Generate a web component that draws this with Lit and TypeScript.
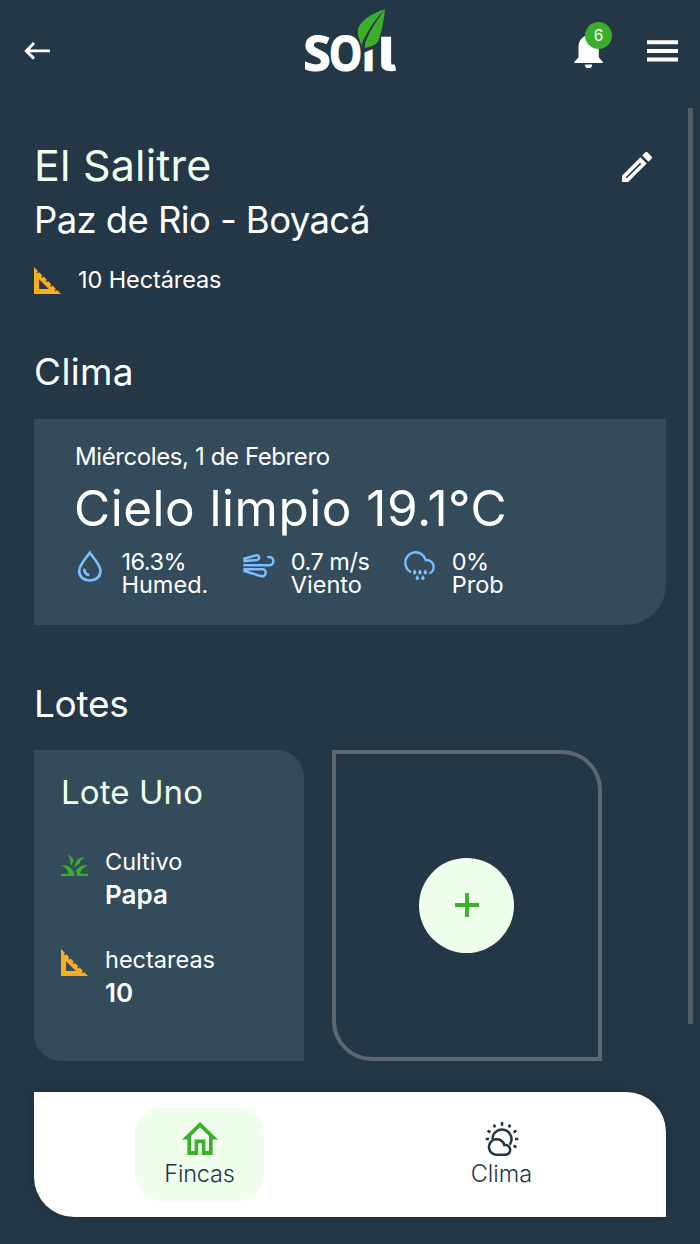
import { LitElement, html, css, svg } from "lit";
import { customElement, property } from "lit/decorators.js";

const squareFoot = html`<svg class="foot" viewBox="4 4 16 16" aria-hidden="true">
  <path d="M17.66 17.66l-.7.7-.71-.71.7-.7-1.94-1.94-.7.7-.71-.71.7-.7-1.94-1.94-.7.7-.71-.71.7-.7L9.7 9.7l-.7.7-.71-.71.7-.7-1.94-1.94-.7.7-.71-.71.7-.7L4 4v16h16zM7 17v-5.76L12.76 17z"/>
</svg>`;

const grass = html`<svg class="grass" viewBox="2 4 20 16" preserveAspectRatio="none" aria-hidden="true">
  <path d="M12 20H2v-2h5.75C7.02 15.19 4.81 12.99 2 12.26 2.64 12.1 3.31 12 4 12c4.42 0 8 3.58 8 8zM22 12.26C21.36 12.1 20.69 12 20 12c-2.93 0-5.48 1.58-6.88 3.93.29.66.53 1.35.67 2.07.13.65.2 1.32.2 2H22v-2h-5.75c.73-2.81 2.94-5.01 5.75-5.74zM15.64 11.02c.78-2.09 2.23-3.84 4.09-5C15.44 6.16 12 9.67 12 14v.02c.95-1.27 2.2-2.3 3.64-3zM11.42 8.85C10.58 6.66 8.88 4.89 6.7 4 8.14 5.86 9 8.18 9 10.71c0 .21-.03.41-.04.61.43.24.83.52 1.22.82.21-1.18.65-2.29 1.24-3.29z"/>
</svg>`;

const rainDrop = (x: number, y: number) =>
  svg`<path class="drop" d="M${x} ${y}c3 4 5 7 5 10a5 5.500 0 0 1-10 0c0-3 2-6 5-10z"/>`;

@customElement("soil-header")
export class SoilHeader extends LitElement {
  @property({ type: Number }) count = 0;

  static styles = css`
    :host { display: grid; grid-template-columns: 290px 120px 290px; height: 108px; }
    svg { display: block; }
    .back { margin: 39px 0 0 24px; width: 28px; height: 24px; fill: none; stroke: #fff; stroke-width: 2.9; }
    .logo { width: 120px; height: 90px; }
    .leaf { fill: #3dae2b; }
    .word {
      fill: #fff; stroke: #fff; stroke-width: 3;
      font-family: "Open Sans", "Noto Sans", sans-serif; font-weight: 700; font-size: 144px;
    }
    .stem { font-family: Inter, sans-serif; font-weight: 800; font-size: 134px; stroke-width: 1; }
    .tail { font-family: Inter, sans-serif; font-weight: 800; font-size: 139px; stroke-width: 1; font-feature-settings: "cv05"; }
    .cut { fill: #243746; }
    .actions { display: flex; padding-left: 164px; }
    .bell { position: relative; width: 73px; padding-top: 34px; }
    .bell svg { width: 29px; height: 35px; fill: #fff; }
    .badge {
      position: absolute; left: 11px; top: 22px; width: 27px; height: 27px; border-radius: 50%;
      background: #3dae2b; color: #fff; font-size: 15.5px; line-height: 27px; text-align: center;
    }
    .menu { margin-top: 40px; width: 31px; height: 22px; fill: #fff; }
  `;

  render() {
    return html`
      <svg class="back" viewBox="0 0 28 24"><path d="M26 11.9H2.5M10 4L2.3 11.9 10 19.6"/></svg>
      <svg class="logo" viewBox="0 0 360 270">
        <text class="word" x="40" y="213" textLength="83" lengthAdjust="spacingAndGlyphs">S</text>
        <text class="word" x="116" y="213" textLength="101" lengthAdjust="spacingAndGlyphs">O</text>
        <text class="word stem" x="217" y="213">ı</text>
        <text class="word tail" x="265" y="213" textLength="54" lengthAdjust="spacingAndGlyphs">l</text>
        <path class="cut" d="M218 130h38v14l-38 16z"/>
        <path class="leaf" d="M285 27C250 38 213 60 204 86c-2 19 4 34 11 50 1-8 7-21 17-38 14-26 32-48 53-71z"/>
        <path class="leaf" d="M285 27c-21 31-43 61-56 93-4 10-5 18-4 24 15-4 32-8 41-22 10-32 16-62 19-95z"/>
      </svg>
      <div class="actions">
        <div class="bell">
          <svg viewBox="0 0 29 35"><path d="M.3 29V27.800L4.500 23.600V13C4.500 6 9 1.500 14.500 1.500S24.800 6 24.800 13V23.600L28.700 27.800V29zM10.800 30.400h7.400a3.700 3.700 0 0 1-7.400 0z"/></svg>
          <span class="badge">${this.count}</span>
        </div>
        <svg class="menu" viewBox="0 0 31 22"><path d="M0 .3h31v4H0zM0 9h31v4H0zM0 17.400h31v4H0z"/></svg>
      </div>`;
  }
}

@customElement("weather-card")
export class WeatherCard extends LitElement {
  static styles = css`
    :host {
      display: block; box-sizing: border-box; height: 206px; padding: 22px 41px 0;
      background: #344b5b; border-bottom-right-radius: 40px;
    }
    .date { font-size: 24px; line-height: 32px; letter-spacing: -.4px; }
    .now { font-size: 49.500px; line-height: 70px; letter-spacing: .5px; white-space: nowrap; margin-left: -1px; }
    .stats { display: grid; grid-template-columns: 165px 162px 1fr; margin-top: 6px; }
    .stat { display: flex; font-size: 23.500px; line-height: 24px; white-space: nowrap; }
    .figure { letter-spacing: -.5px; padding-top: 1px; line-height: 23px; }
    svg { display: block; fill: none; stroke: #7abfff; }
    .humidity { width: 28px; height: 32.700px; margin: 1px 17.500px 0 1px; stroke-width: 8; }
    .wind { width: 33.300px; height: 26px; margin: 4px 15.500px 0 2px; stroke-width: 7.500; }
    .rain { width: 33.300px; height: 32px; margin: 1px 15.500px 0 1px; stroke-width: 7; }
    .drop { fill: #7abfff; stroke: none; }
  `;

  render() {
    return html`
      <div class="date">Miércoles, 1 de Febrero</div>
      <div class="now">Cielo limpio 19.1°C</div>
      <div class="stats">
        <div class="stat">
          <svg class="humidity" viewBox="168 420 84 98"><path d="M209.500 428C200 442 177.500 465 177.500 483c0 19 15.500 28.500 32 28.500s32-9.500 32-28.500c0-18-22.500-41-32-55z"/><path d="M193 476c0 11 6 18 15 19"/></svg>
          <div><div class="figure">16.3%</div><div>Humed.</div></div>
        </div>
        <div class="stat">
          <svg class="wind" viewBox="666 430 100 78"><path d="M670 448l37-11c12-3 14 12 4 14l-41 3.500M670 467h77a12.500 12.500 0 1 0-5-23.500M670 479h58c14 0 11 23-3 21-14-3-34-12-55-17"/></svg>
          <div><div class="figure">0.7 m/s</div><div>Viento</div></div>
        </div>
        <div class="stat">
          <svg class="rain" viewBox="248 422 100 96">
            <path d="M272 489c-10-6-17-17-17-28a31 31 0 0 1 61-9c16 0 24 10 24 21s-6 18-13 18"/>
            ${[[283, 480], [299, 480], [315, 480], [291, 497], [308, 497]].map(([x, y]) => rainDrop(x, y))}
          </svg>
          <div><div class="figure">0%</div><div>Prob</div></div>
        </div>
      </div>`;
  }
}

@customElement("lot-card")
export class LotCard extends LitElement {
  static styles = css`
    :host {
      display: block; box-sizing: border-box; width: 270px; height: 310.500px; padding: 22px 27px 0;
      background: #344b5b; border-radius: 0 27px 0 27px;
    }
    .name { font-size: 33px; line-height: 41px; letter-spacing: .1px; color: #efffec; }
    .row { display: grid; grid-template-columns: 44px 1fr; height: 65px; margin-top: 33px; }
    .row.crop { margin-top: 32px; }
    .label { font-size: 23.500px; line-height: 33px; }
    .value { font-size: 26px; line-height: 34px; font-weight: 600; }
    svg { display: block; width: 27px; }
    .grass { height: 22.500px; fill: #3dae2b; margin-top: 8.500px; }
    .foot { height: 27px; fill: #f7ae20; margin-top: 6px; }
  `;

  render() {
    return html`
      <div class="name">Lote Uno</div>
      <div class="row crop">${grass}<div><div class="label">Cultivo</div><div class="value">Papa</div></div></div>
      <div class="row">${squareFoot}<div><div class="label">hectareas</div><div class="value">10</div></div></div>`;
  }
}

@customElement("tab-bar")
export class TabBar extends LitElement {
  static styles = css`
    :host {
      display: grid; grid-template-columns: 331px 273px; box-sizing: border-box; height: 125px;
      padding-top: 15.500px; background: #fff; border-radius: 0 40px 0 40px; color: #243746;
      box-shadow: 0 0 7px rgba(0, 0, 0, .22);
    }
    .tab {
      justify-self: center; box-sizing: border-box; width: 128.500px; height: 94px; padding-top: 15px;
      border-radius: 27px; display: flex; flex-direction: column; align-items: center;
      font-size: 23.500px; font-weight: 300; line-height: 32px;
    }
    .active { background: #efffec; letter-spacing: -.2px; }
    svg { display: block; }
    .home { width: 36px; height: 33px; fill: #3dae2b; margin-bottom: 3px; }
    .sun { width: 34px; height: 36px; margin: -1px 0 1px; fill: none; stroke: #243746; stroke-width: 7.500; }
  `;

  render() {
    return html`
      <div class="tab active">
        <svg class="home" viewBox="2 3 20 17" preserveAspectRatio="none"><path d="M12 5.690l5 4.500V18h-2v-6H9v6H7v-7.810l5-4.500M12 3L2 12h3v8h6v-6h2v6h6v-8h3z"/></svg>
        Fincas
      </div>
      <div class="tab">
        <svg class="sun" viewBox="405 123 102 108">
          <path d="M456 126v11M476 142.400l5-8.700M436 142.400l-5-8.700M490.600 157l8.700-5M421.400 157l-8.700-5M495 177h10M407 177h10M490.600 197l8.700 5"/>
          <path d="M427.500 178A28.500 28.500 0 1 1 479 194"/>
          <path d="M440 224.500A23.500 23.500 0 1 1 463 195a14.800 14.800 0 1 1 5 29.500z"/>
        </svg>
        Clima
      </div>`;
  }
}

@customElement("app-root")
export class AppRoot extends LitElement {
  static styles = css`
    :host {
      display: block; position: relative; width: 700px; height: 1244px; overflow: hidden;
      background: #243746; color: #fff; font-family: Inter, "Liberation Sans", sans-serif;
    }
    main { padding: 0 34px; }
    svg { display: block; }
    .title { display: flex; justify-content: space-between; padding-top: 32px; height: 53px; }
    h1 { margin: 0; font-size: 43px; line-height: 50px; font-weight: 400; letter-spacing: .2px; color: #efffec; }
    .edit { width: 40px; height: 40px; fill: #fff; margin: 7.300px 9px 0 0; }
    .place { font-size: 36.500px; line-height: 54px; letter-spacing: -.6px; }
    .area { display: flex; align-items: center; gap: 17px; height: 32px; margin-top: 16px; font-size: 23.500px; letter-spacing: -.1px; }
    .foot { width: 27px; height: 27px; fill: #f7ae20; margin-top: 3px; }
    h2 { margin: 0; font-size: 37px; line-height: 50px; font-weight: 400; }
    .climate { margin-top: 52px; letter-spacing: .35px; }
    weather-card { margin-top: 22px; }
    .lots { margin-top: 54px; letter-spacing: -.3px; }
    .list { display: flex; gap: 27.500px; margin-top: 21px; }
    .empty {
      box-sizing: border-box; width: 270px; height: 310.500px; display: grid; place-items: center;
      border: 4px solid #5c6771; border-radius: 0 40px 0 40px;
    }
    .add { display: grid; place-items: center; width: 95px; height: 95px; border-radius: 50%; background: #efffec; }
    .add svg { width: 24px; height: 24px; stroke: #3dae2b; stroke-width: 3.800; }
    tab-bar { margin: 31.200px 34px 0; }
    .scroll { position: absolute; left: 688px; top: 108px; width: 5px; height: 916px; background: #535d65; }
  `;

  render() {
    return html`
      <soil-header .count=${6}></soil-header>
      <main>
        <div class="title">
          <h1>El Salitre</h1>
          <svg class="edit" viewBox="0 0 24 24"><path d="M13.860 9.420l.72.72L6.020 18.600H5.400v-.62l8.460-8.560M17.660 3c-.25 0-.51.1-.7.29l-1.830 1.830 3.750 3.750 1.830-1.830c.39-.39.39-1.020 0-1.410l-2.340-2.340c-.2-.2-.45-.29-.71-.29zm-3.600 3.190L3 17.250V21h3.750L17.810 9.940l-3.750-3.750z"/></svg>
        </div>
        <div class="place">Paz de Rio - Boyacá</div>
        <div class="area">${squareFoot}<span>10 Hectáreas</span></div>
        <h2 class="climate">Clima</h2>
        <weather-card></weather-card>
        <h2 class="lots">Lotes</h2>
        <div class="list">
          <lot-card></lot-card>
          <div class="empty"><div class="add"><svg viewBox="0 0 24 24"><path d="M12 0v24M0 12h24"/></svg></div></div>
        </div>
      </main>
      <tab-bar></tab-bar>
      <div class="scroll"></div>`;
  }
}
